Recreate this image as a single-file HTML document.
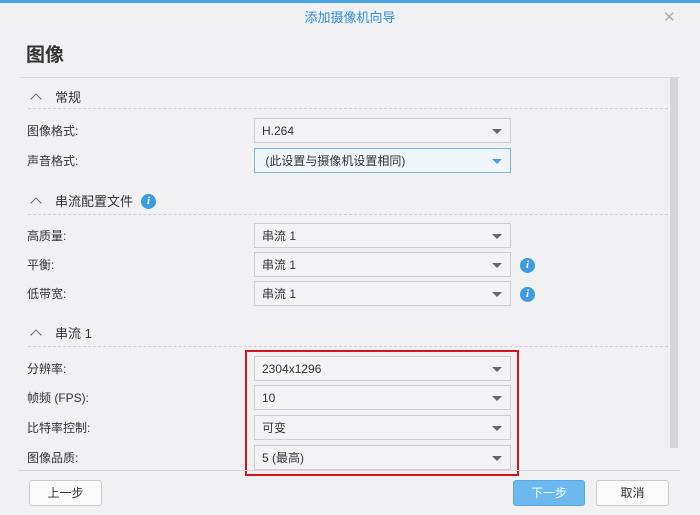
<!DOCTYPE html>
<html><head><meta charset="utf-8"><style>
*{box-sizing:border-box;margin:0;padding:0}
body{width:700px;height:515px;background:#f1f1f3;font-family:"Liberation Sans","Noto Sans CJK SC",sans-serif;position:relative;overflow:hidden;color:#333;line-height:1.2}
.a{position:absolute}
.topbar{left:0;top:0;width:700px;height:3px;background:#4aa3df}
.title{left:0;width:700px;top:10px;text-align:center;color:#2e8fd8;font-size:13px}
.close{left:663px;top:9px;color:#b0b0b0;font-size:15px}
.h{left:26px;top:45px;font-size:19px;font-weight:bold;color:#333}
.line{left:20px;width:660px;height:1px;background:#d8d8dc}
.dash{left:28px;width:640px;border-top:1px dashed #d0d0d4;height:0}
.sec{left:32px;font-size:13px;color:#333}
.chev{position:absolute;left:0;top:5px;width:8px;height:8px;border-left:1.5px solid #666;border-top:1.5px solid #666;transform:rotate(45deg)}
.sec span{padding-left:23px}
.lab{left:27px;font-size:12px;color:#333}
.sel{left:254px;width:257px;height:25px;border:1px solid #cfcfd3;background:#f3f3f5;font-size:12px;padding:5px 0 0 7px;color:#333}
.sel:after{content:"";position:absolute;right:8px;top:10px;border-left:5px solid transparent;border-right:5px solid transparent;border-top:5px solid #666}
.sel.blue{border-color:#7db7e0;background:#f0f5fa}
.sel.blue:after{border-top-color:#4a9ee0}
.info{width:15px;height:15px;border-radius:50%;background:#3d9be0;color:#fff;font:italic bold 11px "Liberation Serif",serif;text-align:center;line-height:15px}
.scroll{left:670px;top:78px;width:8px;height:370px;background:#d6d6da}
.red{left:245px;top:350px;width:274px;height:126px;border:2px solid #d4161c}
.btn{height:26px;border:1px solid #ccc;background:#fafafa;border-radius:3px;font-size:12px;text-align:center;line-height:24px;color:#333}
</style></head><body>
<div class="a topbar"></div>
<div class="a title">添加摄像机向导</div>
<div class="a close">✕</div>
<div class="a h">图像</div>
<div class="a line" style="top:77px"></div>
<div class="a scroll"></div>

<div class="a sec" style="top:90px"><i class="chev"></i><span>常规</span></div>
<div class="a dash" style="top:108px"></div>
<div class="a lab" style="top:124px">图像格式:</div>
<div class="a sel" style="top:118px">H.264</div>
<div class="a lab" style="top:154px">声音格式:</div>
<div class="a sel blue" style="top:148px">&nbsp;(此设置与摄像机设置相同)</div>

<div class="a sec" style="top:194px"><i class="chev"></i><span>串流配置文件</span></div>
<div class="a info" style="left:141px;top:194px">i</div>
<div class="a dash" style="top:214px"></div>
<div class="a lab" style="top:229px">高质量:</div>
<div class="a sel" style="top:223px">串流 1</div>
<div class="a lab" style="top:258px">平衡:</div>
<div class="a sel" style="top:252px">串流 1</div>
<div class="a info" style="left:520px;top:258px">i</div>
<div class="a lab" style="top:287px">低带宽:</div>
<div class="a sel" style="top:281px">串流 1</div>
<div class="a info" style="left:520px;top:287px">i</div>

<div class="a sec" style="top:326px"><i class="chev"></i><span>串流 1</span></div>
<div class="a dash" style="top:346px"></div>
<div class="a lab" style="top:362px">分辨率:</div>
<div class="a sel" style="top:356px">2304x1296</div>
<div class="a lab" style="top:391px">帧频 (FPS):</div>
<div class="a sel" style="top:385px">10</div>
<div class="a lab" style="top:421px">比特率控制:</div>
<div class="a sel" style="top:415px">可变</div>
<div class="a lab" style="top:451px">图像品质:</div>
<div class="a sel" style="top:445px">5 (最高)</div>
<div class="a red"></div>
<div class="a line" style="top:470px;left:18px;width:662px"></div>

<div class="a btn" style="left:29px;top:480px;width:73px">上一步</div>
<div class="a btn" style="left:513px;top:480px;width:72px;background:#6cb9ef;border-color:#5aa9e2;color:#fff">下一步</div>
<div class="a btn" style="left:596px;top:480px;width:73px">取消</div>
</body></html>
